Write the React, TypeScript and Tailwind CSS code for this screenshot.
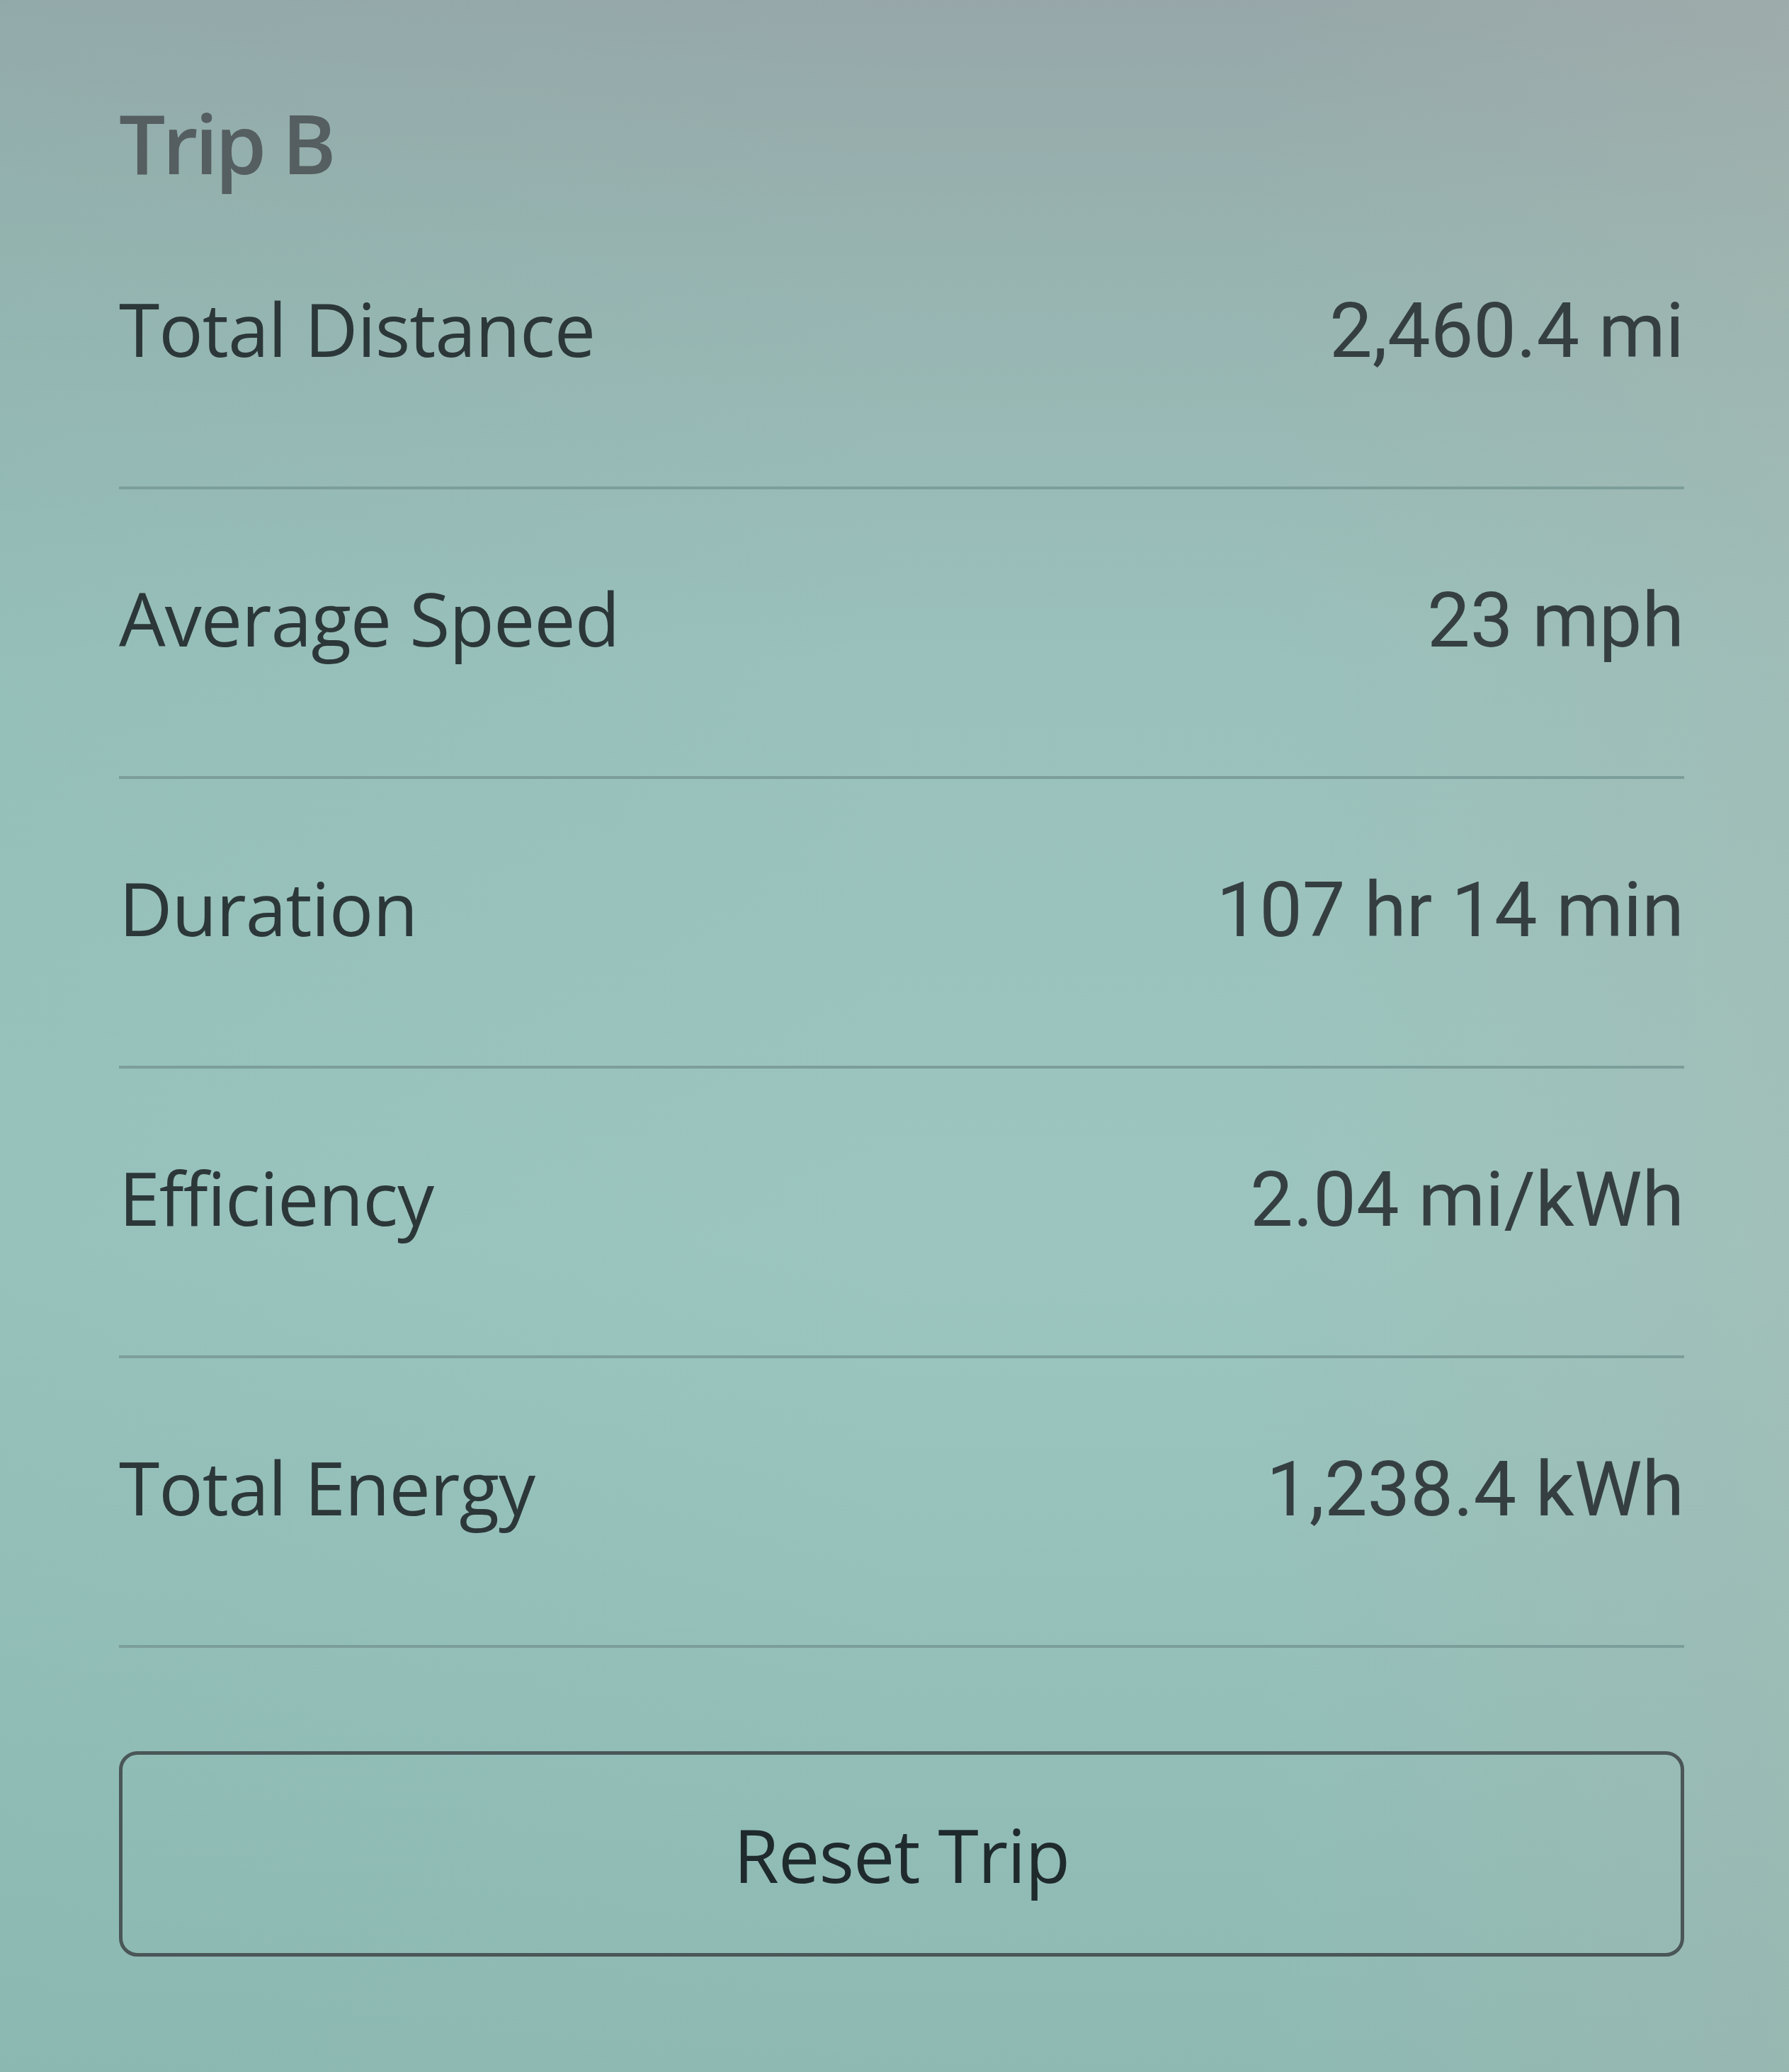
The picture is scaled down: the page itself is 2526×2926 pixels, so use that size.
import React from "react";

const rows = [
  { label: "Total Distance", value: "2,460.4 mi" },
  { label: "Average Speed", value: "23 mph" },
  { label: "Duration", value: "107 hr 14 min" },
  { label: "Efficiency", value: "2.04 mi/kWh" },
  { label: "Total Energy", value: "1,238.4 kWh" },
];

export default function App() {
  return (
    <div className="relative w-full h-[2926px] overflow-hidden bg-[linear-gradient(180deg,#97a7a9_0%,#97b3b0_12%,#9ac1bc_32%,#9cc5bf_60%,#93beb8_85%,#8eb9b3_100%)]">
      <div className="pointer-events-none absolute inset-0 bg-[linear-gradient(90deg,rgba(130,180,172,0.2)_0%,rgba(0,0,0,0)_50%,rgba(0,0,0,0)_70%,rgba(172,180,172,0.3)_100%)]" />
      <div className="relative flex flex-col pl-[168px] pr-[148px] pt-[121px]">
        <h1 className="font-['Open_Sans',sans-serif] font-semibold text-[116px] leading-[161px] tracking-[-4px] text-[#555e61]">
          Trip B
        </h1>
        {rows.map((r) => (
          <div key={r.label} className="flex flex-col">
            <div className="flex items-baseline justify-between pt-[111px] pb-[146px]">
              <span className="font-['Open_Sans',sans-serif] text-[104px] leading-[1.362] tracking-[-1px] text-[#2c3739]">
                {r.label}
              </span>
              <span className="font-['Roboto',sans-serif] text-[108px] leading-[1.362] text-[#353f42]">
                {r.value}
              </span>
            </div>
            <div className="h-[4px] bg-[#7c9e9a]" />
          </div>
        ))}
        <button className="mt-[146px] flex h-[290px] items-center justify-center rounded-[26px] border-[5px] border-[#4a5657] bg-transparent">
          <span className="font-['Open_Sans',sans-serif] text-[104px] leading-[1.362] tracking-[-1px] text-[#1f2a2d]">
            Reset Trip
          </span>
        </button>
      </div>
    </div>
  );
}
